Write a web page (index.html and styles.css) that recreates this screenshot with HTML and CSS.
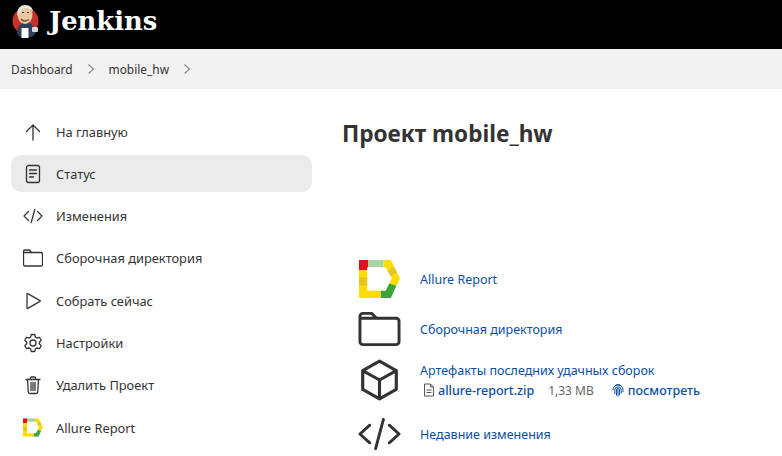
FILE: index.html
```html
<!DOCTYPE html>
<html lang="en">
<head>
    <meta charset="UTF-8">
    <meta name="viewport" content="width=device-width, initial-scale=1.0">
    <title>Проект mobile_hw</title>
    <link rel="stylesheet" href="styles.css">
</head>
<body>
    <svg class="defs" width="0" height="0">
        <symbol id="allure" viewBox="0 0 40 37">
            <polygon points="0,0 9,0 9,7 8,7 8,10 0,10" fill="#e3101c"/>
            <polygon points="9,0 24,0 24,7 9,7" fill="#a9d3a4"/>
            <polygon points="24,0 31,0 34,6 28,11 26,7 24,7" fill="#ffdc00"/>
            <polygon points="34,6 37.500,13 31,16 28,11" fill="#e6c61e"/>
            <polygon points="37.500,13 40,18 36.500,25 29.500,23 32,18 31,16" fill="#ffdc00"/>
            <polygon points="36.500,25 31,37 21,37 21,30 26,30 29.500,23" fill="#3da43c"/>
            <polygon points="0,10 8,10 8,30 21,30 21,37 0,37" fill="#ffdc00"/>
            <polygon points="0,17 8,17 8,25 0,25" fill="#e6c61e"/>
        </symbol>
    </svg>

    <header class="topbar">
        <svg class="logo" viewBox="0 0 30 36" width="30" height="36">
            <circle cx="14.500" cy="18" r="13" fill="#c8322c"/>
            <path d="M6 31c0-7 3-11 9-12 6 1 9 5 10 11l-4 4H9z" fill="#2e3f5c"/>
            <ellipse cx="14" cy="12" rx="7.500" ry="9" fill="#eac7a0"/>
            <path d="M6.500 13C5.500 6 9 2 14 2c5 0 8 3 8 7-2-3-5-4.500-8-4-3 .5-5 4-7.500 8z" fill="#e9e6df"/>
            <path d="M11 9.500h2M16 9.500h2" stroke="#333" stroke-width="1"/>
            <path d="M10 16c2 2.500 5 2.500 8 .5" stroke="#7a4a36" stroke-width="1.300" fill="none"/>
            <rect x="10.500" y="25" width="7" height="10" fill="#fff"/>
            <rect x="21" y="24" width="6" height="5" rx="1" fill="#d9d9d9"/>
        </svg>
        <span class="brand">Jenkins</span>
    </header>

    <nav class="crumbs">
        <a>Dashboard</a>
        <svg class="chev" viewBox="0 0 8 12" width="8" height="12"><path d="M1.500 1.500 6.500 6l-5 4.500"/></svg>
        <a>mobile_hw</a>
        <svg class="chev" viewBox="0 0 8 12" width="8" height="12"><path d="M1.500 1.500 6.500 6l-5 4.500"/></svg>
    </nav>

    <div class="page">
        <aside class="side">
            <a class="side-item">
                <svg class="ico" viewBox="0 0 20 20"><path d="M10 18V3M3.500 9.500 10 3l6.500 6.500"/></svg>
                На главную
            </a>
            <a class="side-item active">
                <svg class="ico" viewBox="0 0 20 20"><rect x="3.500" y="1.500" width="13" height="17" rx="2"/><path d="M6.500 6h7M6.500 9.500h7M6.500 13h4"/></svg>
                Статус
            </a>
            <a class="side-item">
                <svg class="ico" viewBox="0 0 20 20"><path d="M5.500 5.500 1 10l4.500 4.500M14.500 5.500 19 10l-4.500 4.500M11.800 3.500 8.200 16.500"/></svg>
                Изменения
            </a>
            <a class="side-item">
                <svg class="ico" viewBox="0 0 20 20"><path d="M.5 5V3.500A1.500 1.500 0 0 1 2 2h4.500l2 2.500H18a1.500 1.500 0 0 1 1.500 1.500v10.500A1.500 1.500 0 0 1 18 18H2a1.500 1.500 0 0 1-1.500-1.500zM.5 4.500h8"/></svg>
                Сборочная директория
            </a>
            <a class="side-item">
                <svg class="ico" viewBox="0 0 20 20"><path d="M4 3v14a.5.5 0 0 0 .8.4L17 10.400a.5.5 0 0 0 0-.8L4.800 2.600A.5.5 0 0 0 4 3z"/></svg>
                Собрать сейчас
            </a>
            <a class="side-item">
                <svg class="ico" viewBox="0 0 20 20"><circle cx="10" cy="10" r="3"/><path d="M8.300 1.500h3.400l.7 2.600 1.500.9 2.600-.7 1.700 3-1.900 1.900v1.600l1.900 1.900-1.700 3-2.600-.7-1.500.9-.7 2.600H8.300l-.7-2.600-1.500-.9-2.600.7-1.700-3L3.700 10.800V9.200L1.800 7.300l1.700-3 2.600.7 1.500-.9z"/></svg>
                Настройки
            </a>
            <a class="side-item">
                <svg class="ico" viewBox="0 0 20 20"><path d="M3 4.500h14M7.500 4.500V3a1 1 0 0 1 1-1h3a1 1 0 0 1 1 1v1.500M4.500 4.500l.8 12.500a1.500 1.500 0 0 0 1.500 1.500h6.400a1.500 1.500 0 0 0 1.500-1.500l.8-12.500M8 7.500v8M10 7.500v8M12 7.500v8"/></svg>
                Удалить Проект
            </a>
            <a class="side-item">
                <svg class="ico allure" viewBox="0 0 40 37"><use href="#allure"/></svg>
                Allure Report
            </a>
        </aside>

        <main class="main">
            <h1 class="title">Проект mobile_hw</h1>
            <ul class="links">
                <li class="link-row">
                    <svg class="big-ico" viewBox="0 0 40 37"><use href="#allure"/></svg>
                    <a class="link">Allure Report</a>
                </li>
                <li class="link-row">
                    <svg class="big-ico line" viewBox="0 0 44 36"><path d="M2 7V5a3 3 0 0 1 3-3h9l5 5h20a3 3 0 0 1 3 3v21a3 3 0 0 1-3 3H5a3 3 0 0 1-3-3zM2 7h17"/></svg>
                    <a class="link">Сборочная директория</a>
                </li>
                <li class="link-row artifact-row">
                    <svg class="big-ico line tall" viewBox="0 0 40 40"><path d="M20 2 36 11v18L20 38 4 29V11zM4 11l16 9 16-9M20 20v18"/></svg>
                    <div class="artifacts">
                        <a class="link">Артефакты последних удачных сборок</a>
                        <div class="artifact">
                            <svg class="file-ico" viewBox="0 0 12 14"><path d="M1.500 1h6l3 3v9h-9zM7.500 1v3h3M3.500 7h5M3.500 9.500h5"/></svg>
                            <a class="link strong">allure-report.zip</a>
                            <span class="size">1,33 MB</span>
                            <svg class="print-ico" viewBox="0 0 12 14"><path d="M2.500 3a5 5 0 0 1 7 0M1 7a5 5 0 0 1 10 0v2M2.800 11V7a3.200 3.200 0 0 1 6.400 0v3.500M4.500 12.500V7a1.500 1.500 0 0 1 3 0v5M6 6.500v7"/></svg>
                            <a class="link strong">посмотреть</a>
                        </div>
                    </div>
                </li>
                <li class="link-row">
                    <svg class="big-ico line" viewBox="0 0 44 34"><path d="M12 8 2 17l10 9M32 8l10 9-10 9M26 2l-8 30"/></svg>
                    <a class="link">Недавние изменения</a>
                </li>
            </ul>
        </main>
    </div>
</body>
</html>
```

FILE: styles.css
```css
* {
    box-sizing: border-box;
}
body {
    margin: 0;
    height: 456px;
    overflow: hidden;
    font-family: "Noto Sans", Arial, sans-serif;
    font-size: 12.850px;
    color: #333;
    background: white;
}
.defs {
    display: block;
}
.topbar {
    display: flex;
    align-items: center;
    gap: 8px;
    height: 49px;
    padding: 0 0 7px 11px;
    background: black;
}
.logo {
    flex: none;
}
.brand {
    font-family: "DejaVu Serif", Georgia, serif;
    font-size: 25.800px;
    font-weight: bold;
    color: white;
}
.crumbs {
    display: flex;
    align-items: center;
    height: 40px;
    padding-left: 11px;
    background: #f2f2f2;
    color: #333;
    font-size: 11.900px;
}
.chev {
    margin: 0 14px;
    fill: none;
    stroke: #8a8a8a;
    stroke-width: 1.200;
}
.page {
    display: flex;
}
.side {
    display: flex;
    flex-direction: column;
    gap: 5.300px;
    flex: none;
    width: 301px;
    margin: 24px 0 0 11px;
}
.side-item {
    display: flex;
    align-items: center;
    gap: 13px;
    height: 37px;
    padding-left: 12px;
    border-radius: 10px;
    color: #333;
}
.side-item.active {
    background: #ebebeb;
}
.ico {
    flex: none;
    width: 20px;
    height: 20px;
    fill: none;
    stroke: #333;
    stroke-width: 1.300;
    stroke-linecap: round;
    stroke-linejoin: round;
}
.ico.allure {
    stroke: none;
    height: 19px;
}
.main {
    flex: 1;
    padding: 30px 0 0 30px;
}
.title {
    margin: 0;
    font-size: 22.600px;
    font-weight: 700;
    line-height: 30px;
    color: #333;
}
.links {
    display: flex;
    flex-direction: column;
    margin: 0;
    padding: 105px 0 0 16px;
    list-style: none;
}
.link-row {
    display: flex;
    align-items: center;
    gap: 19px;
    height: 50px;
}
.link-row.artifact-row {
    height: 52px;
    margin-bottom: 3px;
}
.big-ico {
    flex: none;
    width: 43px;
    height: 38px;
    stroke: none;
}
.big-ico.line {
    fill: none;
    stroke: #333;
    stroke-width: 3;
    stroke-linecap: round;
    stroke-linejoin: round;
}
.big-ico.tall {
    height: 42px;
}
.link {
    color: #0b4ea2;
    font-size: 12.500px;
}
.link.strong {
    font-weight: 500;
}
.artifacts {
    display: flex;
    flex-direction: column;
    gap: 3px;
}
.artifact {
    display: flex;
    align-items: center;
    padding-left: 3px;
}
.file-ico {
    width: 12px;
    height: 14px;
    margin-right: 3px;
    fill: none;
    stroke: #555;
    stroke-width: 1;
}
.print-ico {
    width: 12px;
    height: 14px;
    margin-right: 4px;
    fill: none;
    stroke: #0b4ea2;
    stroke-width: 1;
}
.size {
    margin: 0 18px 0 14px;
    color: #666;
    font-size: 12px;
}
```
